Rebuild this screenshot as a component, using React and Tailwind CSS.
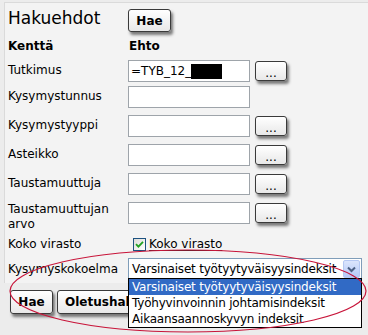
const font = "font-['DejaVu_Sans',Verdana,sans-serif]"

function Btn({ children, className = '' }) {
  return (
    <div
      className={`flex items-center justify-center rounded-[3px] border border-[#3a3a3a] bg-gradient-to-b from-white to-[#e8e8e8] text-[12px] text-black shadow-[2px_3px_3px_rgba(0,0,0,0.5)] ${className}`}
    >
      {children}
    </div>
  )
}

function Field({ children }) {
  return (
    <div className="flex h-[22px] w-[122px] items-center border border-[#9ea4aa] bg-white pl-[2px] text-[12px]">
      {children}
    </div>
  )
}

function Row({ label, button = true, className = '', labelClass = 'pt-[2px]', children }) {
  return (
    <div className={`flex items-start ${className}`}>
      <div className={`w-[120px] text-[12px] leading-[15px] ${labelClass}`}>{label}</div>
      {children || <Field />}
      {button && <Btn className="ml-[5px] mt-[1px] h-[20px] w-[32px] pt-[4px]">...</Btn>}
    </div>
  )
}

export default function App() {
  const options = [
    'Varsinaiset työtyytyväisyysindeksit',
    'Työhyvinvoinnin johtamisindeksit',
    'Aikaansaannoskyvyn indeksit',
  ]

  return (
    <div className={`relative h-[335px] w-[368px] overflow-hidden bg-[#ececec] text-black ${font}`}>
      <div className="ml-[4px] mt-[2px] h-[281px] border-l border-t border-[#dadada] bg-[#f3f3f3] pl-[3px] pt-[6px]">
        <div className="flex h-[23px] items-start">
          <div className="mt-[-1px] w-[120px] text-[17px] leading-[20px]">Hakuehdot</div>
          <Btn className="h-[23px] w-[43px] font-bold">Hae</Btn>
        </div>

        <div className="mt-[6px] flex text-[12px] font-bold leading-[16px]">
          <div className="w-[121px]">Kenttä</div>
          <div>Ehto</div>
        </div>

        <Row label="Tutkimus" className="mt-[6px] h-[22px]" labelClass="pt-[3px]">
          <Field>
            <span>=TYB_12_</span>
            <span className="inline-block h-[15px] w-[31px] bg-black" />
          </Field>
        </Row>
        <Row label="Kysymystunnus" button={false} className="mt-[4px] h-[22px]" labelClass="pt-[3px]" />
        <Row label="Kysymystyyppi" className="mt-[7px] h-[22px]" labelClass="pt-[3px]" />
        <Row label="Asteikko" className="mt-[7px] h-[22px]" labelClass="pt-[3px]" />
        <Row label="Taustamuuttuja" className="mt-[7px] h-[22px]" labelClass="pt-[3px]" />
        <Row label={<>Taustamuuttujan<br />arvo</>} className="mt-[7px] h-[29px]" labelClass="pt-[0px]" />

        <div className="mt-[5px] flex h-[22px] items-start">
          <div className="w-[120px] pt-[1px] text-[12px] leading-[15px]">Koko virasto</div>
          <div className="ml-[5px] mt-[2px] flex h-[13px] w-[13px] items-center justify-center border border-[#1c5180] bg-gradient-to-br from-[#dcdcd7] to-white">
            <svg width="9" height="9" viewBox="0 0 9 9">
              <path d="M1 4.2 L3.4 6.6 L8 1.8" fill="none" stroke="#21a121" strokeWidth="1.8" />
            </svg>
          </div>
          <div className="ml-[3px] pt-[1px] text-[12px] leading-[15px] underline decoration-[#222] underline-offset-[2px]">
            Koko virasto
          </div>
        </div>

        <div className="flex h-[22px] items-start">
          <div className="w-[120px] pt-[4px] text-[12px] leading-[15px]">Kysymyskokoelma</div>
          <div className="flex h-[22px] w-[234px] items-center justify-between border border-[#7f9db9] bg-white pl-[3px] pr-[1px]">
            <span className="text-[12px] tracking-[-0.2px]">{options[0]}</span>
            <div className="flex h-[18px] w-[17px] items-center justify-center rounded-[2px] border border-[#b5c8f3] bg-gradient-to-b from-[#dbe5fd] to-[#b5c9f7]">
              <svg width="9" height="7" viewBox="0 0 9 7">
                <path d="M1 1.5 L4.5 5 L8 1.5" fill="none" stroke="#4d6185" strokeWidth="2" />
              </svg>
            </div>
          </div>
        </div>
      </div>

      <div className="flex pl-[10px] pt-[7px]">
        <Btn className="h-[24px] w-[43px] font-bold">Hae</Btn>
        <Btn className="ml-[4px] h-[24px] w-[96px] justify-start pl-[7px] font-bold">
          <span className="w-[63px] overflow-hidden whitespace-nowrap">Oletushaku</span>
        </Btn>
      </div>

      <div className="absolute left-[128px] top-[278px] z-10 w-[234px] border border-black bg-white text-[12px] tracking-[-0.2px]">
        {options.map((o, i) => (
          <div
            key={o}
            className={`h-[16px] pl-[3px] leading-[16px] ${i === 0 ? 'bg-[#316ac5] text-white' : ''}`}
          >
            {o}
          </div>
        ))}
      </div>

      <svg className="pointer-events-none absolute left-0 top-0 z-20" width="368" height="335">
        <ellipse cx="188" cy="291" rx="178" ry="41" fill="none" stroke="#c8153a" strokeWidth="1.2" />
      </svg>
    </div>
  )
}
